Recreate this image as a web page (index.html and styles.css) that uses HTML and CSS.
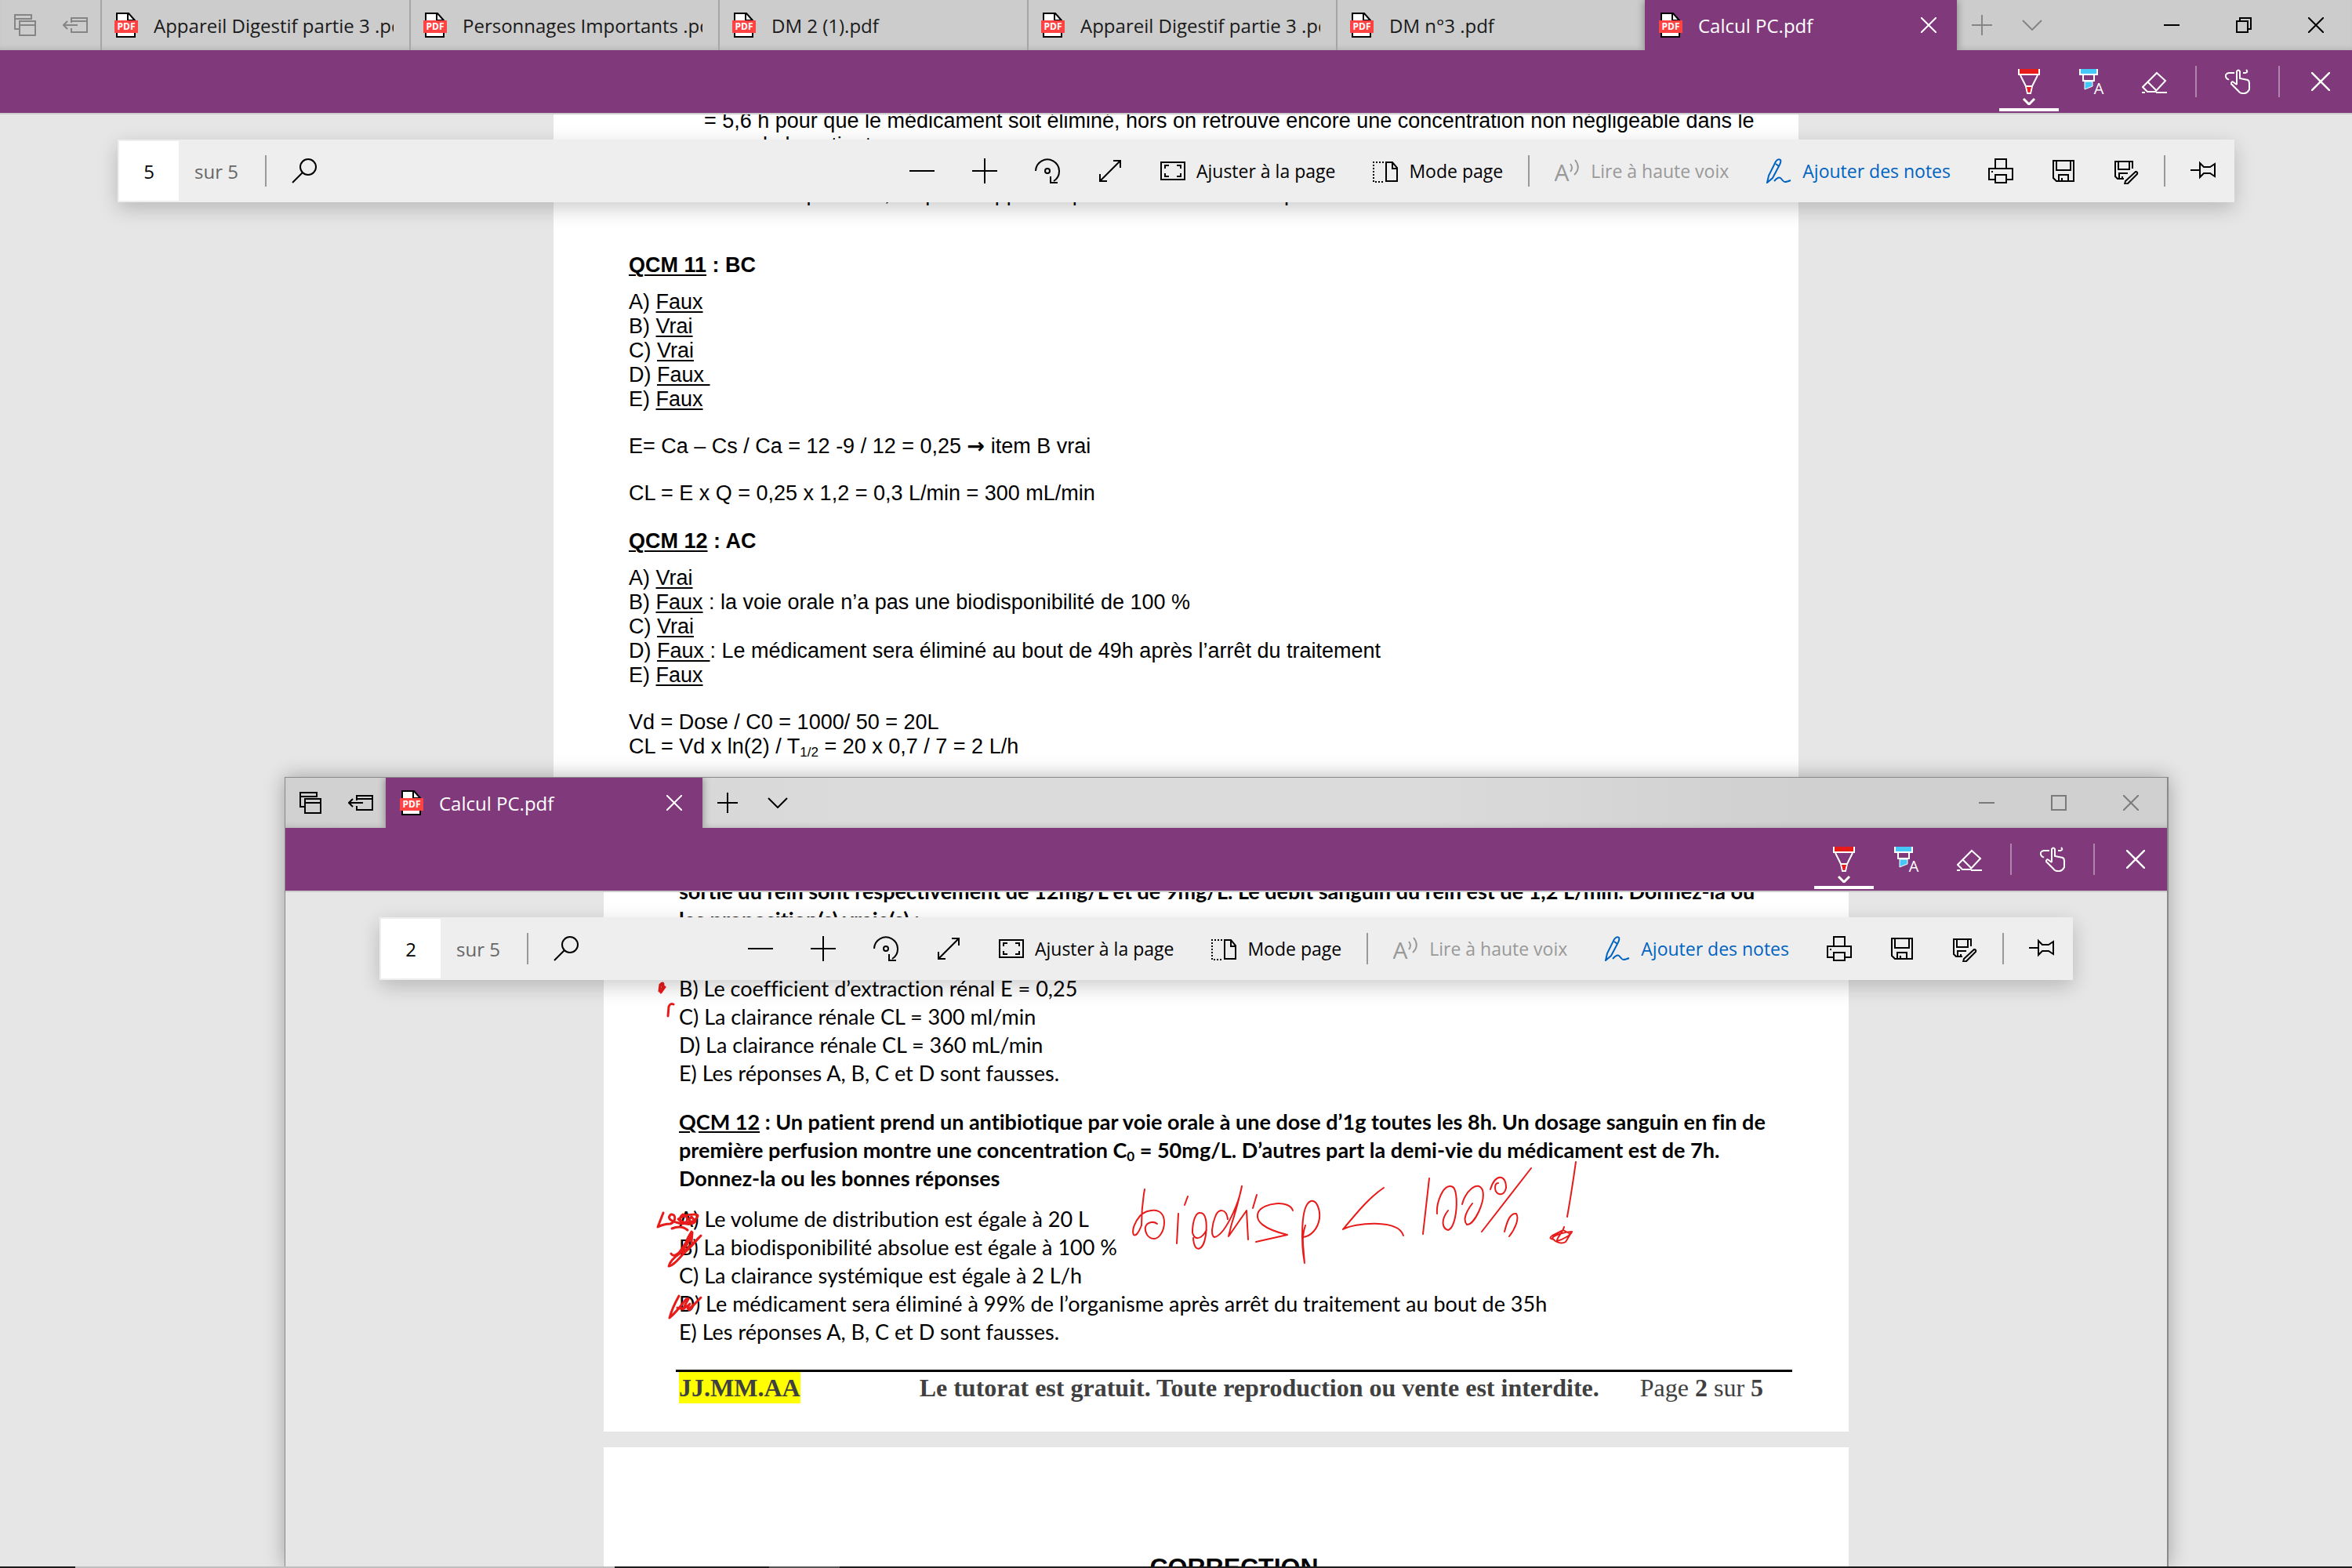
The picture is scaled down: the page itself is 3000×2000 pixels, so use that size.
FILE: index.html
```html
<!DOCTYPE html>
<html lang="fr">
<head>
    <meta charset="UTF-8">
    <meta name="viewport" content="width=device-width, initial-scale=1.0">
    <title>Calcul PC.pdf</title>
    <link rel="stylesheet" href="styles.css">
</head>
<body>

    <!-- icon set -->
    <svg class="sprite" aria-hidden="true">
        <symbol id="i-stack" viewBox="0 0 28 28"><path d="M6 19H1V1h21v6M1 6h21M7 9h20v18H7zM7 14h20"/></symbol>
        <symbol id="i-aside" viewBox="0 0 32 20"><path d="M11 7V1h20v18H11v-5M11 5h20M1 10h18M6 5l-5 5 5 5"/></symbol>
        <symbol id="i-plus" viewBox="0 0 26 26"><path d="M13 0v26M0 13h26"/></symbol>
        <symbol id="i-chevron" viewBox="0 0 26 14"><path d="M1 1l12 12L25 1"/></symbol>
        <symbol id="i-cross" viewBox="0 0 20 20"><path d="M0 0l20 20M20 0L0 20"/></symbol>
        <symbol id="i-min" viewBox="0 0 20 20"><path d="M0 10h20"/></symbol>
        <symbol id="i-max" viewBox="0 0 20 20"><path d="M1 1h18v18H1z"/></symbol>
        <symbol id="i-restore" viewBox="0 0 20 20"><path d="M1 5h14v14H1zM5 5V1h14v14h-4"/></symbol>
        <symbol id="i-pdf" viewBox="0 0 30 32">
            <path d="M3 1h15l8 9v21H3z" fill="#fff" stroke="#000"/>
            <path d="M17 1v9h9" stroke="#000"/>
            <rect y="10" width="30" height="16" fill="#ff4343" stroke="none"/>
            <text x="15" y="22" text-anchor="middle" class="pdf-text">PDF</text>
        </symbol>
        <symbol id="i-pen" viewBox="0 0 32 46">
            <path d="M4 0h24v6H4z" fill="#e81b1b" stroke="none"/>
            <path d="M3 0v7h26V0M5 8l7 14h8l7-14M12 22l2 9h4l2-9"/>
            <path d="M13 23h6l-2 7h-2z" fill="#e81b1b" stroke="none"/>
            <path d="M9 38l7 7 7-7" stroke-width="3"/>
        </symbol>
        <symbol id="i-marker" viewBox="0 0 32 32">
            <path d="M2 0h20v6H2z" fill="#45c8f8" stroke="none"/>
            <path d="M1 0v7h22V0M5 8v7h14V8"/>
            <path d="M7 16h10v6L7 26z" fill="#45c8f8" stroke-width="1"/>
            <text x="25" y="32" text-anchor="middle" class="marker-text">A</text>
        </symbol>
        <symbol id="i-eraser" viewBox="0 0 32 32"><path d="M19 5l11 10-13 14H7l-6-6zM7 16l12 12M0 30h4M18 30h14"/></symbol>
        <symbol id="i-touch" viewBox="0 0 32 32"><path d="M15 20V3q2-3 4 0v9l10 2q2 1 2 4v8q-3 6-9 5-3 0-5-3l-9-9q0-4 3-2l4 3M12 5H5q-5 1-4 5 2 4 4 3M23 5h3q4-1 1-4"/></symbol>
        <symbol id="i-search" viewBox="0 0 32 32"><circle cx="21" cy="11" r="10"/><path d="M14 18L1 31"/></symbol>
        <symbol id="i-out" viewBox="0 0 32 32"><path d="M0 16h32"/></symbol>
        <symbol id="i-in" viewBox="0 0 32 32"><path d="M0 16h32M16 0v32"/></symbol>
        <symbol id="i-rotate" viewBox="0 0 32 32"><path d="M1 16A15 15 0 1 1 24 29M20 23v8h9"/><circle cx="16" cy="16" r="3"/></symbol>
        <symbol id="i-full" viewBox="0 0 32 32"><path d="M3 29L29 3M20 3h9v9M3 20v9h9"/></symbol>
        <symbol id="i-fit" viewBox="0 0 32 32"><path d="M1 5h30v22H1zM6 13V9h5M21 9h5v4M26 19v4h-5M11 23H6v-4"/></symbol>
        <symbol id="i-mode" viewBox="0 0 32 32"><path d="M17 5h8l6 7v17H17zM25 5v8h6"/><path d="M14 5H1v25h14" stroke-dasharray="2 2"/></symbol>
        <symbol id="i-read" viewBox="0 0 32 32"><text x="9" y="29" text-anchor="middle" class="read-text">A</text><path d="M20 7q4 5 0 10M26 2q8 10-1 19"/></symbol>
        <symbol id="i-notes" viewBox="0 0 32 32"><path d="M1 31l2-9L12 4q3-4 6-2 1 2-1 6L8 25zM12 7l4 3M10 29q6-7 9-3t5 4 7-2" /></symbol>
        <symbol id="i-print" viewBox="0 0 32 32"><path d="M9 13V1h14v12M9 27H1V13h30v14h-8M9 21h14v10H9zM4 17h2"/></symbol>
        <symbol id="i-save" viewBox="0 0 32 32"><path d="M3 3h26v26H7l-4-4zM7 3v12h18V3M10 29v-8h12v8M14 29v-4"/></symbol>
        <symbol id="i-saveas" viewBox="0 0 32 34"><path d="M13 27H5l-3-3V5h22v9M6 5v10h14V5M7 27v-7h11M11 27v-3M28 18q3 0 2 3L18 33l-4 1 1-4z"/></symbol>
        <symbol id="i-pin" viewBox="0 0 32 32"><path d="M0 15h12M12 6l5 5h8l6-4v16l-6-4h-8l-5 5z"/></symbol>
    </svg>

    <main class="desktop">

        <!-- main window -->
        <section class="window window-main">
            <header class="titlebar inactive">
                <button class="tab-tool" aria-label="Onglets mis de côté"><svg class="ic-stack"><use href="#i-stack"/></svg></button>
                <button class="tab-tool" aria-label="Mettre de côté"><svg class="ic-aside"><use href="#i-aside"/></svg></button>
                <nav class="tabs">
                    <a class="tab" href="#"><svg class="ic-pdf"><use href="#i-pdf"/></svg><span>Appareil Digestif partie 3 .pdf</span></a>
                    <a class="tab" href="#"><svg class="ic-pdf"><use href="#i-pdf"/></svg><span>Personnages Importants .pdf</span></a>
                    <a class="tab" href="#"><svg class="ic-pdf"><use href="#i-pdf"/></svg><span>DM 2 (1).pdf</span></a>
                    <a class="tab" href="#"><svg class="ic-pdf"><use href="#i-pdf"/></svg><span>Appareil Digestif partie 3 .pdf</span></a>
                    <a class="tab" href="#"><svg class="ic-pdf"><use href="#i-pdf"/></svg><span>DM n°3 .pdf</span></a>
                    <div class="tab active">
                        <svg class="ic-pdf"><use href="#i-pdf"/></svg><span>Calcul PC.pdf</span>
                        <button class="tab-close" aria-label="Fermer l'onglet"><svg class="ic-20"><use href="#i-cross"/></svg></button>
                    </div>
                </nav>
                <button class="tab-tool" aria-label="Nouvel onglet"><svg class="ic-plus"><use href="#i-plus"/></svg></button>
                <button class="tab-tool" aria-label="Aperçus"><svg class="ic-chevron"><use href="#i-chevron"/></svg></button>
                <div class="win-controls">
                    <button aria-label="Réduire"><svg class="ic-20"><use href="#i-min"/></svg></button>
                    <button aria-label="Restaurer"><svg class="ic-20"><use href="#i-restore"/></svg></button>
                    <button aria-label="Fermer"><svg class="ic-20"><use href="#i-cross"/></svg></button>
                </div>
            </header>

            <div class="inkbar">
                <button class="selected" aria-label="Stylo"><svg class="ic-pen"><use href="#i-pen"/></svg></button>
                <button aria-label="Surligneur"><svg class="ic-32"><use href="#i-marker"/></svg></button>
                <button aria-label="Gomme"><svg class="ic-32"><use href="#i-eraser"/></svg></button>
                <span class="sep"></span>
                <button aria-label="Écriture tactile"><svg class="ic-32"><use href="#i-touch"/></svg></button>
                <span class="sep"></span>
                <button aria-label="Quitter"><svg class="ic-cross"><use href="#i-cross"/></svg></button>
            </div>

            <div class="viewer">
                <div class="pdfbar">
                    <input type="text" id="page-main" value="5">
                    <label for="page-main">sur 5</label>
                    <span class="sep"></span>
                    <button aria-label="Rechercher"><svg class="ic-32"><use href="#i-search"/></svg></button>
                    <div class="pdfbar-right">
                        <button aria-label="Zoom arrière"><svg class="ic-32"><use href="#i-out"/></svg></button>
                        <button aria-label="Zoom avant"><svg class="ic-32"><use href="#i-in"/></svg></button>
                        <button aria-label="Faire pivoter"><svg class="ic-32"><use href="#i-rotate"/></svg></button>
                        <button aria-label="Plein écran"><svg class="ic-32"><use href="#i-full"/></svg></button>
                        <button class="wide"><svg class="ic-32"><use href="#i-fit"/></svg>Ajuster à la page</button>
                        <button class="wide"><svg class="ic-32"><use href="#i-mode"/></svg>Mode page</button>
                        <span class="sep"></span>
                        <button class="wide" disabled><svg class="ic-32"><use href="#i-read"/></svg>Lire à haute voix</button>
                        <button class="wide blue"><svg class="ic-32"><use href="#i-notes"/></svg>Ajouter des notes</button>
                        <button aria-label="Imprimer"><svg class="ic-32"><use href="#i-print"/></svg></button>
                        <button aria-label="Enregistrer"><svg class="ic-32"><use href="#i-save"/></svg></button>
                        <button aria-label="Enregistrer sous"><svg class="ic-saveas"><use href="#i-saveas"/></svg></button>
                        <span class="sep"></span>
                        <button aria-label="Épingler"><svg class="ic-32"><use href="#i-pin"/></svg></button>
                    </div>
                </div>

                <article class="page page-correction">
                    <p class="indent">= 5,6 h pour que le médicament soit éliminé, hors on retrouve encore une concentration non négligeable dans le<br>
                    sang de la patiente.<br><br>
                    Il est donc possible, on peut supposer que le médicament est p</p>

                    <h2><u>QCM 11</u> : BC</h2>
                    <ul>
                        <li>A) <u>Faux</u></li>
                        <li>B) <u>Vrai</u></li>
                        <li>C) <u>Vrai</u></li>
                        <li>D) <u>Faux&nbsp;</u></li>
                        <li>E) <u>Faux</u></li>
                    </ul>
                    <p>E= Ca – Cs / Ca = 12 -9 / 12 = 0,25 <span class="arrow">→</span> item B vrai</p>
                    <p>CL = E x Q = 0,25 x 1,2 = 0,3 L/min = 300 mL/min</p>

                    <h2><u>QCM 12</u> : AC</h2>
                    <ul>
                        <li>A) <u>Vrai</u></li>
                        <li>B) <u>Faux</u> : la voie orale n’a pas une biodisponibilité de 100 %</li>
                        <li>C) <u>Vrai</u></li>
                        <li>D) <u>Faux </u>: Le médicament sera éliminé au bout de 49h après l’arrêt du traitement</li>
                        <li>E) <u>Faux</u></li>
                    </ul>
                    <p>Vd = Dose / C0 = 1000/ 50 = 20L<br>
                    CL = Vd x ln(2) / T<sub>1/2</sub> = 20 x 0,7 / 7 = 2 L/h</p>
                </article>
            </div>
        </section>

        <!-- second window, over the first one -->
        <section class="window window-front">
            <header class="titlebar">
                <button class="tab-tool" aria-label="Onglets mis de côté"><svg class="ic-stack"><use href="#i-stack"/></svg></button>
                <button class="tab-tool" aria-label="Mettre de côté"><svg class="ic-aside"><use href="#i-aside"/></svg></button>
                <nav class="tabs">
                    <div class="tab active">
                        <svg class="ic-pdf"><use href="#i-pdf"/></svg><span>Calcul PC.pdf</span>
                        <button class="tab-close" aria-label="Fermer l'onglet"><svg class="ic-20"><use href="#i-cross"/></svg></button>
                    </div>
                </nav>
                <button class="tab-tool" aria-label="Nouvel onglet"><svg class="ic-plus"><use href="#i-plus"/></svg></button>
                <button class="tab-tool" aria-label="Aperçus"><svg class="ic-chevron"><use href="#i-chevron"/></svg></button>
                <div class="win-controls">
                    <button aria-label="Réduire"><svg class="ic-20"><use href="#i-min"/></svg></button>
                    <button aria-label="Agrandir"><svg class="ic-20"><use href="#i-max"/></svg></button>
                    <button aria-label="Fermer"><svg class="ic-20"><use href="#i-cross"/></svg></button>
                </div>
            </header>

            <div class="inkbar">
                <button class="selected" aria-label="Stylo"><svg class="ic-pen"><use href="#i-pen"/></svg></button>
                <button aria-label="Surligneur"><svg class="ic-32"><use href="#i-marker"/></svg></button>
                <button aria-label="Gomme"><svg class="ic-32"><use href="#i-eraser"/></svg></button>
                <span class="sep"></span>
                <button aria-label="Écriture tactile"><svg class="ic-32"><use href="#i-touch"/></svg></button>
                <span class="sep"></span>
                <button aria-label="Quitter"><svg class="ic-cross"><use href="#i-cross"/></svg></button>
            </div>

            <div class="viewer">
                <div class="pdfbar">
                    <input type="text" id="page-front" value="2">
                    <label for="page-front">sur 5</label>
                    <span class="sep"></span>
                    <button aria-label="Rechercher"><svg class="ic-32"><use href="#i-search"/></svg></button>
                    <div class="pdfbar-right">
                        <button aria-label="Zoom arrière"><svg class="ic-32"><use href="#i-out"/></svg></button>
                        <button aria-label="Zoom avant"><svg class="ic-32"><use href="#i-in"/></svg></button>
                        <button aria-label="Faire pivoter"><svg class="ic-32"><use href="#i-rotate"/></svg></button>
                        <button aria-label="Plein écran"><svg class="ic-32"><use href="#i-full"/></svg></button>
                        <button class="wide"><svg class="ic-32"><use href="#i-fit"/></svg>Ajuster à la page</button>
                        <button class="wide"><svg class="ic-32"><use href="#i-mode"/></svg>Mode page</button>
                        <span class="sep"></span>
                        <button class="wide" disabled><svg class="ic-32"><use href="#i-read"/></svg>Lire à haute voix</button>
                        <button class="wide blue"><svg class="ic-32"><use href="#i-notes"/></svg>Ajouter des notes</button>
                        <button aria-label="Imprimer"><svg class="ic-32"><use href="#i-print"/></svg></button>
                        <button aria-label="Enregistrer"><svg class="ic-32"><use href="#i-save"/></svg></button>
                        <button aria-label="Enregistrer sous"><svg class="ic-saveas"><use href="#i-saveas"/></svg></button>
                        <span class="sep"></span>
                        <button aria-label="Épingler"><svg class="ic-32"><use href="#i-pin"/></svg></button>
                    </div>
                </div>

                <article class="page page-questions">
                    <h3>sortie du rein sont respectivement de 12mg/L et de 9mg/L. Le débit sanguin du rein est de 1,2 L/min. Donnez-la ou<br>
                    les proposition(s) vraie(s) :</h3>
                    <ul>
                        <li>&nbsp;</li>
                        <li>B) Le coefficient d’extraction rénal E = 0,25</li>
                        <li>C) La clairance rénale CL = 300 ml/min</li>
                        <li>D) La clairance rénale CL = 360 mL/min</li>
                        <li>E) Les réponses A, B, C et D sont fausses.</li>
                    </ul>
                    <h3><u>QCM 12</u> : Un patient prend un antibiotique par voie orale à une dose d’1g toutes les 8h. Un dosage sanguin en fin de<br>
                    première perfusion montre une concentration C<sub>0</sub> = 50mg/L. D’autres part la demi-vie du médicament est de 7h.<br>
                    Donnez-la ou les bonnes réponses</h3>
                    <ul>
                        <li>A) Le volume de distribution est égale à 20 L</li>
                        <li>B) La biodisponibilité absolue est égale à 100 %</li>
                        <li>C) La clairance systémique est égale à 2 L/h</li>
                        <li>D) Le médicament sera éliminé à 99% de l’organisme après arrêt du traitement au bout de 35h</li>
                        <li>E) Les réponses A, B, C et D sont fausses.</li>
                    </ul>
                    <footer>
                        <mark>JJ.MM.AA</mark>
                        <strong>Le tutorat est gratuit. Toute reproduction ou vente est interdite.</strong>
                        <span>Page <b>2</b> sur <b>5</b></span>
                    </footer>

                    <!-- pen strokes -->
                    <svg class="ink" viewBox="830 1250 1200 440" width="1200" height="440">
                        <g stroke-width="3">
                            <path d="M841 1264l1-8q4-4 4 0l-3 10 5-7-6-3M852 1296l1-12q2-5 6-3"/>
                            <path d="M846 1547l-7 18q8-4 16-4c8-3 7-13 1-12-8 6 4 10 14 12 9 0 8-11 1-12-8 6-2 12 10 10 10-5 12-11 4-10-8 0-14 2-20 6 8 8 16 8 22 3l-5-6q-6 5 1 7M857 1567q12-5 20 2"/>
                            <path d="M856 1599q3 5 10-1 10-13 16-27-8 12-11 27 8-7 23-22-12 14-24 25-12 14-17 14 2-8 15-17 11-12 15-26l-1 12"/>
                            <path d="M866 1653q-9 16-12 28 9-8 18-20 5-7 6-4-3 5-7 13 7-5 9-7-4 5-2 7 8-6 16-15-10 10-14 16-4-1-2-6-8 6-14 3"/>
                        </g>
                        <g stroke-width="2">
                            <path d="M1460 1517q-4 22-4 46-6 15-10 12c-3-6 2-17 8-24 9-10 31-12 31 8 0 12-7 21-13 21-9 0-12-10-11-15 2-6 10-8 15-4"/>
                            <path d="M1503 1548l-2 38M1515 1526l-4 11"/>
                            <path d="M1539 1569c-8 14-16 12-18 3 0-14 4-26 10-25 7 0 9 12 7 28-3 22-15 24-16 4"/>
                            <path d="M1566 1555c-2-14-12-14-16-3-4 10-6 24-1 26 12-2 30-38 35-65-4 18-9 36-13 48l-4 16 23-33 2 37"/>
                            <path d="M1603 1524l-5 17M1649 1544c-4-14-38-10-44 2-5 12 8 22 37 29l-40 9"/>
                            <path d="M1665 1563q-4 12-3 24l2 24c-4-22-6-74 8-79 8-2 12 12 11 22-2 14-12 24-22 24"/>
                            <path d="M1765 1515c-18 12-32 29-52 53 14-8 70-14 77 8"/>
                            <path d="M1823 1503l-8 71M1833 1548c-1-14 8-40 20-34 8 4 6 52-6 55-7-2-10-12 0-25"/>
                            <path d="M1865 1536c4-16 20-32 26-18 4 14-10 44-20 44-6-6 0-18 7-27"/>
                            <path d="M1901 1517c6-20 20-20 20-2-2 12-14 10-14 0 0-4 2-6 4-6M1953 1490l-63 81M1919 1571c4-16 8-24 15-23 4 6-1 19-9 29"/>
                            <path d="M2010 1482q-5 36-11 70M1995 1565c-2 8-10 14-9 18 8-2 18-8 19-12-8 0-22 4-25 8 4 6 12 8 17 5l6-10-9-5-14 7q-6 4 2 5"/>
                        </g>
                    </svg>
                </article>

                <article class="page page-next">
                    <h1>CORRECTION</h1>
                </article>
            </div>
        </section>

    </main>

    <div class="taskbar"><span class="strip"></span><span class="app"></span></div>

</body>
</html>
```
FILE: styles.css
```css
* {
    box-sizing: border-box;
}
body {
    margin: 0;
    height: 100vh;
    display: flex;
    flex-direction: column;
    overflow: hidden;
    font-family: "Open Sans", "Noto Sans", sans-serif;
    font-size: 24px;
    background: #e6e6e6;
    color: #000;
}
button, input {
    font: inherit;
    color: inherit;
    border: none;
    padding: 0;
    background: none;
}
ul {
    list-style: none;
    margin: 0;
    padding: 0;
}

/* icons */
svg {
    fill: none;
    stroke: currentColor;
    stroke-width: 2;
    flex: none;
    display: block;
}
.sprite {
    display: none;
}
.ic-stack { width: 28px; height: 28px; }
.ic-aside { width: 32px; height: 20px; }
.ic-pdf { width: 30px; height: 32px; }
.ic-20 { width: 20px; height: 20px; }
.ic-plus { width: 26px; height: 26px; }
.ic-chevron { width: 26px; height: 14px; }
.ic-32 { width: 32px; height: 32px; }
.ic-saveas { width: 32px; height: 34px; }
.ic-cross { width: 24px; height: 24px; }
.ic-pen { width: 32px; height: 46px; }
.pdf-text {
    font: bold 12px "Open Sans", sans-serif;
    fill: #fff;
    stroke: none;
}
.marker-text {
    font: 20px "Open Sans", sans-serif;
    fill: currentColor;
    stroke: none;
}
.read-text {
    font: 30px "Open Sans", sans-serif;
    fill: currentColor;
    stroke: none;
}

/* windows */
.desktop {
    flex: 1;
    min-height: 0;
    position: relative;
    overflow: hidden;
}
.window {
    display: flex;
    flex-direction: column;
    overflow: hidden;
}
.window-main {
    height: 100%;
}
.window-front {
    position: absolute;
    left: 12.1%;
    right: 7.8%;
    top: 49.6%;
    bottom: 0;
    border: 1px solid #8a8a8a;
    border-right-width: 2px;
    border-bottom: none;
    box-shadow: 0 0 24px rgba(0, 0, 0, 0.3);
}
.titlebar {
    display: flex;
    height: 64px;
    flex: none;
    background: linear-gradient(90deg, #d0d0d0, #dbdbdb 30%, #dbdbdb 60%, #d0d0d0 80%);
    box-shadow: inset 0 -6px 6px -4px rgba(0, 0, 0, 0.12);
}
.titlebar.inactive {
    background: #ccc;
}
.tab-tool {
    width: 64px;
    display: flex;
    align-items: center;
    justify-content: center;
}
.inactive .tab-tool {
    color: #858585;
}
.tabs {
    display: flex;
    min-width: 0;
}
.tab {
    display: flex;
    align-items: center;
    gap: 20px;
    width: 394px;
    padding: 0 20px 0 16px;
    border-left: 2px solid #a6a6a6;
    color: #1a1a1a;
    text-decoration: none;
    white-space: nowrap;
    overflow: hidden;
}
.tab span {
    flex: 1;
    overflow: hidden;
}
.tab.active {
    width: 398px;
    background: #80397b;
    color: #fff;
    padding-left: 18px;
    border-left: none;
    box-shadow: 0 0 10px rgba(0, 0, 0, 0.4);
}
.window-front .tab.active {
    width: 404px;
}
.tab-close {
    padding: 6px;
}
.win-controls {
    margin-left: auto;
    display: flex;
}
.win-controls button {
    width: 92px;
    display: flex;
    align-items: center;
    justify-content: center;
}
.window-front .win-controls {
    color: #7a7a7a;
}

/* purple ink toolbar */
.inkbar {
    display: flex;
    justify-content: flex-end;
    align-items: center;
    height: 82px;
    flex: none;
    background: #80397b;
    color: #fff;
    border-bottom: 2px solid #ccc;
}
.inkbar button {
    width: 80px;
    height: 80px;
    display: flex;
    justify-content: center;
    padding-top: 24px;
}
.inkbar .selected {
    border: 2px solid transparent;
    border-width: 0 2px 2px;
    box-shadow: inset 0 -4px #fff;
    background-clip: padding-box;
}
.inkbar .ic-cross {
    margin-top: 4px;
}
.inkbar .sep {
    width: 2px;
    height: 40px;
    margin: 0 12px;
    background: #b184ae;
}

/* floating pdf toolbar */
.viewer {
    flex: 1;
    min-height: 0;
    position: relative;
    overflow: hidden;
    background: #e6e6e6;
}
.pdfbar {
    position: absolute;
    z-index: 2;
    top: 32px;
    left: 5%;
    right: 5%;
    height: 80px;
    display: flex;
    align-items: center;
    padding-left: 2px;
    background: #eee;
    box-shadow: 0 8px 24px rgba(0, 0, 0, 0.2);
}
.pdfbar input {
    width: 76px;
    height: 76px;
    background: #fff;
    text-align: center;
}
.pdfbar label {
    padding: 0 26px 0 20px;
    color: #666;
}
.pdfbar button {
    min-width: 80px;
    height: 80px;
    display: flex;
    align-items: center;
    justify-content: center;
    gap: 14px;
    font-size: 23px;
    white-space: nowrap;
}
.pdfbar .wide {
    padding: 0 24px;
}
.pdfbar .blue {
    color: #0063c0;
}
.pdfbar button:disabled {
    color: #999;
}
.pdfbar .sep {
    width: 2px;
    height: 40px;
    margin: 0 8px;
    background: #999;
}
.pdfbar-right {
    margin-left: auto;
    display: flex;
    align-items: center;
}

/* pdf pages */
.page {
    position: relative;
    max-width: 1588px;
    margin: 0 auto;
    background: #fff;
    padding: 0 76px 0 96px;
    white-space: nowrap;
}
.page-correction {
    margin-top: -7px;
    min-height: 100%;
    font-family: "Liberation Sans", Arial, sans-serif;
    font-size: 27px;
    line-height: 31px;
}
.page-correction p {
    margin: 29px 0;
}
.page-correction .indent {
    margin: 0 0 60px;
    padding-left: 96px;
}
.page-correction h2 {
    margin: 30px 0 16px;
    font-size: 27px;
}
.page-correction u {
    text-decoration-thickness: 2px;
    text-underline-offset: 3px;
}
.page sub {
    font-size: 17px;
    line-height: 0;
    vertical-align: -4px;
}
.arrow {
    font-family: "DejaVu Sans", sans-serif;
    font-weight: bold;
    line-height: 0;
}
.page-questions {
    margin-top: -19px;
    padding-bottom: 36px;
    font-family: Lato, Carlito, sans-serif;
    font-size: 27px;
    font-variant-ligatures: none;
    line-height: 36px;
}
.page-questions h3 {
    margin: 26px 0 16px;
    font-size: 27px;
}
.page-questions h3:first-child {
    margin-top: 0;
}
.page-questions footer {
    display: flex;
    align-items: baseline;
    margin: 30px -4px 0;
    padding: 0 4px;
    border-top: 3px solid #000;
    font-family: "Liberation Serif", "Times New Roman", serif;
    font-size: 32px;
    line-height: 40px;
    color: #404040;
}
.page-questions mark {
    background: #ff0;
    color: inherit;
    font-weight: bold;
    margin-right: 152px;
}
.page-questions strong {
    margin-right: 52px;
}
.ink {
    position: absolute;
    left: 60px;
    top: 131px;
    color: #e81b1b;
    stroke-linecap: round;
    stroke-linejoin: round;
    stroke-width: inherit;
}
.page-next {
    margin-top: 20px;
    padding-top: 135px;
    min-height: 200px;
}
.page-next h1 {
    margin: 0;
    text-align: center;
    font: bold 32px "Liberation Sans", Arial, sans-serif;
}

/* top edge of the taskbar */
.taskbar {
    display: flex;
    height: 2px;
    flex: none;
    background: #1c1c1c;
    padding-left: 96px;
}
.strip {
    width: 688px;
    background: #bfbfbf;
    margin-right: 197px;
}
.app {
    width: 90px;
    background: #555;
}
```
